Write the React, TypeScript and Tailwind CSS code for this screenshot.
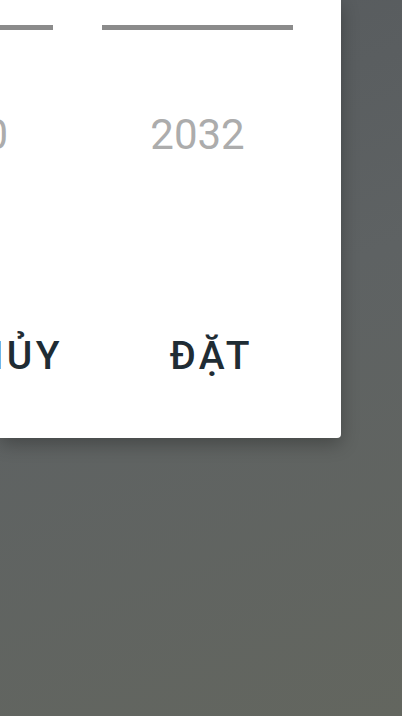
import React from "react";

export default function App() {
  return (
    <div
      className="relative w-[402px] h-[716px] overflow-hidden bg-[linear-gradient(160deg,#565a5d_0%,#5e6263_45%,#63665f_100%)]"
      style={{ fontFamily: "Roboto, 'Noto Sans', sans-serif" }}
    >
      <div className="w-[341px] h-[438px] bg-white rounded-br-[4px] shadow-[0_6px_18px_rgba(0,0,0,0.28)] flex flex-col overflow-hidden">
        <div className="flex flex-row gap-[49px] ml-[-138px]">
          <div className="w-[191px] flex flex-col">
            <div className="mt-[25px] h-[5px] w-full bg-[#8b8b8b]" />
            <div className="mt-[84px] h-[42px] text-[42px] leading-[42px] text-[#acacac] text-right pr-[45px]">
              2030
            </div>
          </div>
          <div className="w-[191px] flex flex-col items-center">
            <div className="mt-[25px] h-[5px] w-full bg-[#8b8b8b]" />
            <div className="mt-[84px] h-[42px] text-[42px] leading-[42px] text-[#acacac]">
              2032
            </div>
          </div>
        </div>
        <div className="mt-[181px] flex flex-row justify-end gap-[106.5px] pr-[88px] whitespace-nowrap">
          <span className="text-[39px] leading-[39px] font-medium tracking-[3.5px] text-[#1f2c34]">HỦY</span>
          <span className="text-[39px] leading-[39px] font-medium tracking-[3.5px] text-[#1f2c34]">ĐẶT</span>
        </div>
      </div>
    </div>
  );
}
